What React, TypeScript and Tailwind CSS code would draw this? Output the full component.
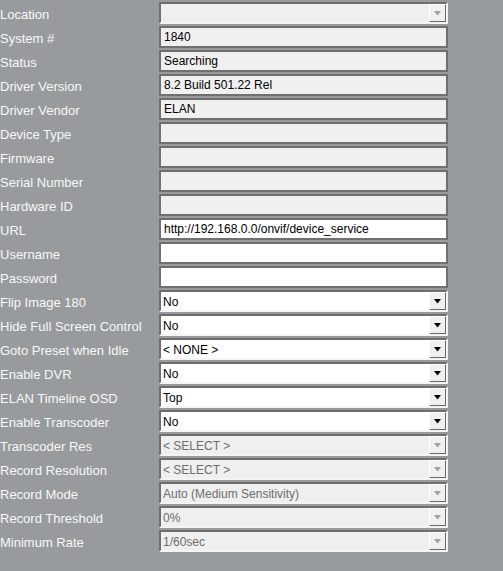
import React from 'react';

type Row = {
  label: string;
  kind: 'text' | 'readonly' | 'select' | 'disabled';
  value?: string;
};

const rows: Row[] = [
  { label: 'Location', kind: 'disabled', value: '' },
  { label: 'System #', kind: 'readonly', value: '1840' },
  { label: 'Status', kind: 'readonly', value: 'Searching' },
  { label: 'Driver Version', kind: 'readonly', value: '8.2 Build 501.22 Rel' },
  { label: 'Driver Vendor', kind: 'readonly', value: 'ELAN' },
  { label: 'Device Type', kind: 'readonly', value: '' },
  { label: 'Firmware', kind: 'readonly', value: '' },
  { label: 'Serial Number', kind: 'readonly', value: '' },
  { label: 'Hardware ID', kind: 'readonly', value: '' },
  { label: 'URL', kind: 'text', value: 'http://192.168.0.0/onvif/device_service' },
  { label: 'Username', kind: 'text', value: '' },
  { label: 'Password', kind: 'text', value: '' },
  { label: 'Flip Image 180', kind: 'select', value: 'No' },
  { label: 'Hide Full Screen Control', kind: 'select', value: 'No' },
  { label: 'Goto Preset when Idle', kind: 'select', value: '< NONE >' },
  { label: 'Enable DVR', kind: 'select', value: 'No' },
  { label: 'ELAN Timeline OSD', kind: 'select', value: 'Top' },
  { label: 'Enable Transcoder', kind: 'select', value: 'No' },
  { label: 'Transcoder Res', kind: 'disabled', value: '< SELECT >' },
  { label: 'Record Resolution', kind: 'disabled', value: '< SELECT >' },
  { label: 'Record Mode', kind: 'disabled', value: 'Auto (Medium Sensitivity)' },
  { label: 'Record Threshold', kind: 'disabled', value: '0%' },
  { label: 'Minimum Rate', kind: 'disabled', value: '1/60sec' },
];

function Arrow({ disabled }: { disabled: boolean }) {
  return (
    <div className="flex h-full w-[17px] shrink-0 items-center justify-center border border-t-white border-l-white border-b-[#6a6a6a] border-r-[#6a6a6a] bg-[#f0f0f0]">
      <svg width="9" height="5" viewBox="0 0 9 5">
        <polygon points="1,0 8,0 4.5,4.5" fill={disabled ? '#a0a0a0' : '#000'} />
      </svg>
    </div>
  );
}

function Field({ row }: { row: Row }) {
  if (row.kind === 'select' || row.kind === 'disabled') {
    const disabled = row.kind === 'disabled';
    return (
      <div
        className={`flex h-[22px] w-[289px] items-stretch border-2 border-t-[#6e6e6e] border-l-[#6e6e6e] border-b-[#f4f4f4] border-r-[#f4f4f4] ${
          disabled ? 'bg-[#efefef] text-[#6d6d6d]' : 'bg-white text-[#000]'
        }`}
      >
        <div className="flex flex-1 items-center px-[2px] pt-[1px] leading-none">{row.value}</div>
        <Arrow disabled={disabled} />
      </div>
    );
  }
  return (
    <div
      className={`flex h-[22px] w-[289px] items-center border-2 border-[#707070] px-[3px] leading-none text-black ${
        row.kind === 'readonly' ? 'bg-[#f0f0f0]' : 'bg-white'
      }`}
    >
      {row.value}
    </div>
  );
}

export default function App() {
  return (
    <div
      className="h-[571px] w-[503px] bg-[#979b9d] pt-[2px] text-[12px]"
      style={{ fontFamily: '"Liberation Sans", Arial, sans-serif' }}
    >
      {rows.map((row) => (
        <div key={row.label} className="mb-[2px] flex h-[22px] items-center">
          <div className="w-[159px] shrink-0 pt-[2px] text-[13px] leading-none text-[#f8f8f8]">{row.label}</div>
          <Field row={row} />
        </div>
      ))}
    </div>
  );
}
